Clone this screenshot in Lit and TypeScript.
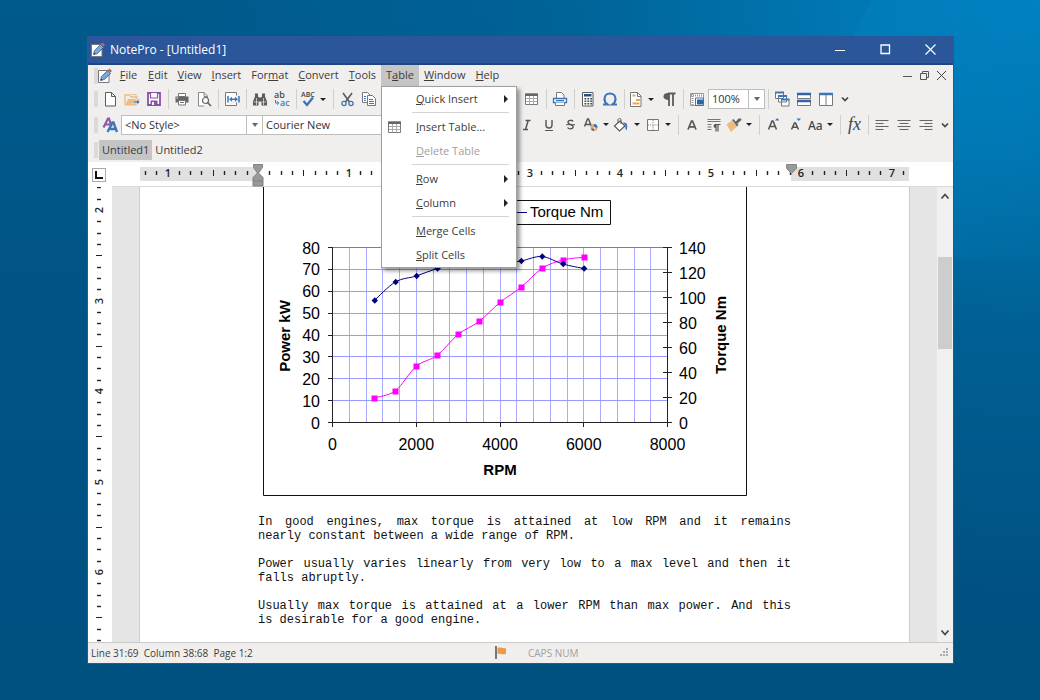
import { LitElement, html, svg, css, nothing } from "lit";
import { customElement, property, state } from "lit/decorators.js";

const G = "#5b5b5b";
const B = "#3a76b8";

/* Toolbar glyphs, each drawn on an 18 x 18 grid. */
const icons: Record<string, unknown> = {
  app: svg`<path d="M2.500 3.500h10.500v12H2.500z" fill="#fff" stroke="#777"/><path d="M4.500 13.500l1-4 6-6 3 3-6 6z" fill="#7aa7d8" stroke="#3a628f" stroke-width=".8"/><path d="M12 3l1.500-1.500 2.500 2.500-1.500 1.500z" fill="#c8606a"/><path d="M4.500 13.500l.6-2 1.400 1.400z" fill="#333"/>`,
  blank: svg`<path d="M4.500 2.500h6l4 4v9.500h-10zM10.500 2.500v4h4" fill="#fff" stroke="${G}"/>`,
  open: svg`<path d="M2 15V5h4.500l1.500 2h6v2" fill="none" stroke="#eebc7c" stroke-width="1.400"/><path d="M2 15.500l3-6.500h12l-3 6.500z" fill="#eebc7c"/><path d="M9 14c1-3 3-3.500 5-3v-2l3 3-3 3v-2c-2-.5-3.500-.2-5 1z" fill="${B}" stroke="#fff" stroke-width=".6"/><path d="M8 4.500h5V7" fill="none" stroke="#eebc7c"/>`,
  save: svg`<path d="M3 3h12v12H3z" fill="#fff" stroke="#8a4fa8" stroke-width="1.800"/><path d="M5.500 3v5h7V3" fill="#fff" stroke="#8a4fa8" stroke-width="1.200"/><path d="M5.500 10.500h7v5h-7z" fill="#8a4fa8"/><path d="M7 12h2v3H7z" fill="#fff"/>`,
  print: svg`<path d="M5.500 3.500h7v3h-7z" fill="#fff" stroke="#777"/><path d="M2.500 6.500h13v6h-13z" fill="#666"/><path d="M3.500 8h1.500" stroke="#fff"/><path d="M5.500 10.500h7v4.500h-7z" fill="#fff" stroke="#777"/><path d="M7 12.500h4" stroke="#777"/>`,
  preview: svg`<path d="M9 16H3.500V2.500h5.500l3.500 3.500v2M9 2.500v4h3.500" fill="#fff" stroke="#888"/><circle cx="10.500" cy="10.500" r="3" fill="#fff" stroke="#666" stroke-width="1.200"/><path d="M12.500 12.500l3.500 3.500" stroke="#666" stroke-width="1.700"/>`,
  fit: svg`<path d="M5 15.500H2.500v-13h11v3M13.500 12.500v3H5" fill="#fff" stroke="#777"/><path d="M5 6v6.500M16 6v6.500M7 9.300h7" stroke="${B}" stroke-width="1.500" fill="none"/><path d="M9 6.800L6 9.300l3 2.500zM12 6.800l3 2.500-3 2.500z" fill="${B}"/>`,
  find: svg`<path d="M4 3.500h3v3l1 1h2l1-1v-3h3v3l2 5v4h-5.500v-4h-3v4H2v-4l2-5z" fill="${G}"/><path d="M5.500 8v7M12.500 8v7M3 12h4M11 12h4" stroke="#f0efee" stroke-width=".7"/>`,
  replace: svg`<text x="1" y="8" font-family="Noto Sans" font-size="9" font-weight="500" fill="#444">ab</text><text x="7" y="16" font-family="Noto Sans" font-size="9" font-weight="500" fill="${B}">ac</text><path d="M2.500 10v3h3M4 11.300l1.800 1.700L4 14.700" fill="none" stroke="${B}"/>`,
  spell: svg`<text x="2" y="7" font-family="Open Sans" font-size="7" font-weight="600" fill="#444">ABC</text><path d="M4.500 11l3.500 4 6-7.500" fill="none" stroke="${B}" stroke-width="2.400"/>`,
  cut: svg`<path d="M5 3l6.500 9M14 3l-6.500 9" stroke="${G}" stroke-width="1.600"/><circle cx="6" cy="13.500" r="2.100" fill="none" stroke="${B}" stroke-width="1.300"/><circle cx="13" cy="13.500" r="2.100" fill="none" stroke="${B}" stroke-width="1.300"/>`,
  copy: svg`<path d="M2.500 2.500h5l2.500 2.500v7.500H2.500z" fill="#fff" stroke="#777"/><path d="M7.500 5.500h5l3 3v7h-8z" fill="#fff" stroke="#777"/><path d="M9 9.500h4M9 11.500h5M9 13.500h5M4 6.500h2M4 8.500h2M4 10.500h2" stroke="${B}"/>`,
  table: svg`<path d="M2.500 4h12v10.500h-12z" fill="#fff" stroke="#777"/><path d="M2 3.500h13v2.500H2z" fill="#666"/><path d="M3 8.500h11.500M3 11.500h11.500M6.500 6v8.500M10.500 6v8.500" stroke="#aaa"/>`,
  printer: svg`<path d="M5.500 8V2.500h5l2.500 2.500v3" fill="#fff" stroke="#777"/><path d="M2.500 8.500h13v4h-13z" fill="#fff" stroke="${B}" stroke-width="1.300"/><path d="M5 10.500h8" stroke="${B}" stroke-width="1.200"/><path d="M4.500 12.500v3h9v-3" fill="#fff" stroke="#777"/>`,
  calc: svg`<path d="M3.500 2.500h10.500v13.500H3.500z" fill="#fff" stroke="${G}"/><path d="M5 4h7.500v2.500H5z" fill="#244f84"/><path d="M5.500 8.800h7.500M5.500 11.300h7.500M5.500 13.800h7.500" stroke="#444" stroke-width="1.400" stroke-dasharray="1.800 1.100"/>`,
  omega: svg`<path d="M2 14.500h4.500c-2-1.500-3-3-3-5.500 0-3.300 2.300-5.500 5.500-5.500s5.500 2.200 5.500 5.500c0 2.500-1 4-3 5.500H16" fill="none" stroke="${B}" stroke-width="2.200"/>`,
  page: svg`<path d="M3.500 2.500h7l3.500 3.500v10.500H3.500z" fill="#fff" stroke="#777"/><path d="M10.500 2.500v4H14" fill="none" stroke="#777"/><path d="M5.500 5.500h3M5.500 13.500h7M9 10h4" stroke="#eba850" stroke-width="2"/>`,
  pilcrow: svg`<path d="M9 16V3.500M13 16V3.500M15.500 3.500H8" stroke="${G}" stroke-width="1.800" fill="none"/><path d="M9 3C5 2.600 3.500 4.500 3.500 6.500S5.500 10 9 10z" fill="${G}"/>`,
  layout: svg`<path d="M2.500 3.500h13v12h-13z" fill="#fff" stroke="#999"/><path d="M3 5.500h12M4.500 4v11" stroke="#999" stroke-width="2" stroke-dasharray="1 1"/><path d="M7.500 8h8v7.500h-8z" stroke="${B}" fill="#fff"/><path d="M9 9.500h6v5H9z" fill="#2f65a5"/>`,
  cascade: svg`<path d="M2.500 2.500h8v6h-8zM5.500 6h8v6h-8zM8.500 9.500H16v6.500H8.500z" fill="#fff" stroke="#777"/><path d="M2 2.500h9M5 6h9M8 9.500h8.500" stroke="${B}" stroke-width="2"/>`,
  tileh: svg`<path d="M2.500 3.500h13v5h-13zM2.500 10.500h13v5h-13z" fill="#fff" stroke="#777"/><path d="M2 4h14M2 11h14" stroke="#2f65a5" stroke-width="2.500"/>`,
  tilev: svg`<path d="M2.500 3.500h13v12h-13zM9 4v11" fill="#fff" stroke="#777"/><path d="M2 4h14" stroke="${B}" stroke-width="2.500"/>`,
  style: svg`<path d="M2.500 11.500L7 2.500h1l2.500 8M4.500 8.500h4.500" fill="none" stroke="#8c5aa8" stroke-width="2.200"/><path d="M6.500 16L11.500 6.500h1L16 16M8.500 13h6" fill="none" stroke="${B}" stroke-width="2.300"/>`,
  bold: svg`<text x="5" y="14" font-family="Noto Sans" font-weight="700" font-size="12" fill="#444">B</text>`,
  italic: svg`<path d="M7.500 4.500h5M5 13.500h5M10.200 4.500L7.500 13.500" fill="none" stroke="#555" stroke-width="1.500"/>`,
  under: svg`<path d="M6 4v5c0 4 6 4 6 0V4" fill="none" stroke="#555" stroke-width="1.400"/><path d="M5 14.500h8" stroke="#555"/>`,
  strike: svg`<path d="M11 5.500C10.500 3.800 6 3.800 6 6.300c0 1.700 1.800 2 2.700 2.300 1.500.4 2.600 1 2.400 2.500-.3 2.300-4.500 2.200-5.500.4" fill="none" stroke="#555" stroke-width="1.400"/><path d="M4 8.700h9" stroke="#555"/>`,
  color: svg`<path d="M2.500 10.500L5.500 3h1l3 7.500M3.500 8.500h5" fill="none" stroke="#555" stroke-width="1.400"/><circle cx="12" cy="11.500" r="3.500" fill="#eba560"/><path d="M12 8a3.500 3.500 0 0 1 3.500 3.500l-3.500.5zM9 13a3.500 3.500 0 0 0 3 2v-3z" fill="${B}"/><circle cx="12.500" cy="12" r="1.100" fill="#f0efee"/>`,
  bucket: svg`<path d="M1.500 10L7 5l5 5-5.500 5z" fill="#fff" stroke="${G}" stroke-width="1.200"/><path d="M5 7V4c0-2 3-2 3 0v4" fill="none" stroke="${G}"/><path d="M10 6.500c4.500-.5 5 3 3.500 8-1.500-1-1.200-3.500-1-5z" fill="${B}"/>`,
  borders: svg`<path d="M3.500 3.500h11v11h-11z" fill="#fff" stroke="#777"/><path d="M9 4v10M4 9h10" stroke="#777" stroke-dasharray="1 1.200"/>`,
  letter: svg`<path d="M5 13.500L8.500 5h1L13 13.500M6.500 10.800h5" fill="none" stroke="#555" stroke-width="1.700"/>`,
  para: svg`<path d="M2.500 3.500h13M2.500 5.500h13M2.500 8.500h4M2.500 11h4M2.500 13.500h4" stroke="#777"/><path d="M11 15.500V9M13 15.500V9M15.500 8.500H9.500" stroke="#555" stroke-width="1.200"/><path d="M11 8.300C8 8 7.500 12 11 12z" fill="#555"/>`,
  brush: svg`<path d="M1.500 8.500l5-4 5.500 6-6 5.500z" fill="#eebc7c"/><path d="M7 4l1.500-1 5 6L12 10.500z" fill="#666"/><path d="M10 6.500l3.500-4 2.500 0 .5 1.500-4.500 4z" fill="#666"/>`,
  grow: svg`<path d="M4.500 13.500L8 5h1l3.500 8.500M6 10.500h5" fill="none" stroke="#555" stroke-width="1.600"/><path d="M11 4.500l2.200-2.500 2.200 2.500z" fill="${B}"/>`,
  shrink: svg`<path d="M5.500 13.500L8.500 7h1l3 6.500M7 11.300h4" fill="none" stroke="#555" stroke-width="1.600"/><path d="M10.500 2.500h4.500L12.700 5z" fill="${B}"/>`,
  casing: svg`<text x="2" y="14" font-family="Noto Sans" font-size="12" font-weight="500" fill="#444">Aa</text>`,
  fx: svg`<text x="3" y="14" font-family="Liberation Serif" font-style="italic" font-size="18" fill="#444">fx</text>`,
  left: svg`<path d="M2.500 4.500h13M2.500 7.500h8M2.500 10.500h13M2.500 13.500h8" stroke="#666"/>`,
  center: svg`<path d="M2.500 4.500h13M4.500 7.500h9M2.500 10.500h13M4.500 13.500h9" stroke="#666"/>`,
  right: svg`<path d="M2.500 4.500h13M7.500 7.500h8M2.500 10.500h13M7.500 13.500h8" stroke="#666"/>`,
  more: svg`<path d="M6 7.500l3 3 3-3" fill="none" stroke="#444" stroke-width="1.700"/>`,
};

const icon = (name: string) =>
  html`<svg width="18" height="18" viewBox="0 0 18 18" aria-hidden="true">${icons[name]}</svg>`;

/* Text with its keyboard accelerator marked by an ampersand. */
const accel = (label: string) => {
  const i = label.indexOf("&");
  return i < 0 ? label : html`${label.slice(0, i)}<u>${label[i + 1]}</u>${label.slice(i + 2)}`;
};

const FILE_TOOLS = ["blank", "open", "save", "|", "print", "preview", "|", "fit", "|", "find", "replace", "|", "spell+", "|", "cut", "copy"];
const INSERT_TOOLS = ["table", "|", "printer", "|", "calc", "omega", "|", "page+", "pilcrow", "|", "layout"];
const WINDOW_TOOLS = ["|", "cascade", "tileh", "tilev"];
const TEXT_TOOLS = ["bold", "italic", "under", "strike", "color+", "bucket+", "borders+", "|", "letter", "para", "brush+", "|", "grow", "shrink", "casing+", "|", "fx", "|", "left", "center", "right"];

const tools = (list: string[]) =>
  list.map((t) => {
    if (t === "|") return html`<span class="sep"></span>`;
    const drop = t.endsWith("+");
    const name = drop ? t.slice(0, -1) : t;
    return html`<button class="tool ${drop ? "drop" : ""}" aria-label=${name}>
      ${icon(name)}${drop ? html`<i class="caret"></i>` : nothing}
    </button>`;
  });

const INCH = 90.5;

@customElement("engine-chart")
class EngineChart extends LitElement {
  static styles = css`
    :host { display: block; }
    svg { display: block; max-width: 100%; font-family: "Liberation Sans", Arial, sans-serif; }
    .num { font-size: 16px; }
    .name { font-size: 15px; font-weight: 700; }
    .key { font-size: 15px; }
    .grid { stroke: #9999ff; }
    .grid.up { stroke: #aaaaff; }
  `;

  power = [[1000, 11.3], [1500, 14.5], [2000, 25.7], [2500, 30.7], [3000, 40.3], [3500, 46.2], [4000, 54.9], [4500, 61.8], [5000, 70.4], [5500, 74.3], [6000, 75.5]];
  torque = [[1000, 97.6], [1500, 112.4], [2000, 117.2], [2500, 123.2], [3000, 127], [3500, 128], [4000, 127], [4500, 129.2], [5000, 132.8], [5500, 126.8], [6000, 123.2]];

  render() {
    const x = (v: number) => 69.5 + (v * 335) / 8000;
    const y = (v: number, max: number) => 235.5 - (v * 175) / max;
    const steps = (n: number) => Array.from({ length: n + 1 }, (_, i) => i);
    const curve = (pts: number[][], max: number) => {
      const p = pts.map(([a, b]) => [x(a), y(b, max)]);
      let d = `M${p[0]}`;
      for (let i = 0; i < p.length - 1; i++) {
        const a = p[Math.max(i - 1, 0)], b = p[i], c = p[i + 1], e = p[Math.min(i + 2, p.length - 1)];
        d += `C${b[0] + (c[0] - a[0]) / 6},${b[1] + (c[1] - a[1]) / 6} ${c[0] - (e[0] - b[0]) / 6},${c[1] - (e[1] - b[1]) / 6} ${c}`;
      }
      return d;
    };
    return html`<svg width="484" height="309" viewBox="0 0 484 309" role="img" aria-label="Power and torque against RPM">
      <path d="M.5 0v308.500h483V0" fill="#fff" stroke="#111" />
      <path d="M130.500 13.500h217v24h-217z" fill="#fff" stroke="#111" />
      <path d="M230 25.500h34" stroke="#000080" />
      <text class="key" x="267" y="30">Torque Nm</text>
      ${steps(19).slice(1).map((i) => svg`<path class="grid up" d="M${Math.floor(x(i * 400)) + 0.5} 61v174"/>`)}
      ${steps(7).slice(1).map((i) => svg`<path class="grid" d="M70 ${Math.floor(y(i * 10, 80)) + 0.5}h334"/>`)}
      <path d="M70 60.500h334" stroke="#808080" />
      <path d="M69.500 60v176M404.500 60v176M65 235.500h344" fill="none" stroke="#222" />
      ${steps(8).map((i) => svg`<path d="M65 ${Math.floor(y(i * 10, 80)) + 0.5}h5" stroke="#222"/>
        <text class="num" x="57" y=${y(i * 10, 80) + 6} text-anchor="end">${i * 10}</text>`)}
      ${steps(7).map((i) => svg`<path d="M400 ${Math.floor(y(i * 20, 140)) + 0.5}h9" stroke="#222"/>
        <text class="num" x="416" y=${y(i * 20, 140) + 6}>${i * 20}</text>`)}
      ${steps(4).map((i) => svg`<path d="M${Math.floor(x(i * 2000)) + 0.5} 235v5" stroke="#222"/>
        <text class="num" x=${x(i * 2000)} y="263" text-anchor="middle">${i * 2000}</text>`)}
      <text class="name" x="237" y="288" text-anchor="middle">RPM</text>
      <text class="name" transform="translate(27 149) rotate(-90)" text-anchor="middle">Power kW</text>
      <text class="name" transform="translate(463 148) rotate(-90)" text-anchor="middle">Torque Nm</text>
      <path d=${curve(this.power, 80)} fill="none" stroke="#f0f" />
      ${this.power.map(([a, b]) => svg`<rect x=${Math.round(x(a)) - 2.5} y=${Math.round(y(b, 80)) - 2.5} width="6" height="6" fill="#f0f"/>`)}
      <path d=${curve(this.torque, 140)} fill="none" stroke="#000080" />
      ${this.torque.map(([a, b]) => svg`<path d="M${x(a) - 2.8} ${y(b, 140)}l3.200-3.200 3.200 3.200-3.200 3.200z" fill="#000080"/>`)}
    </svg>`;
  }
}

@customElement("app-root")
class AppRoot extends LitElement {
  @state() openMenu = "T&able";
  @property({ type: String }) fileName = "Untitled1";

  static styles = css`
    * { box-sizing: border-box; }
    :host {
      box-sizing: border-box;
      display: flex;
      height: 100vh;
      min-height: 400px;
      padding: 36px 86px 36px 87px;
      font: 11px/16px "Open Sans", "Noto Sans", sans-serif;
      color: #3c3c3c;
      background:
        linear-gradient(118deg, transparent 0 74%, rgba(0, 140, 205, 0.22) 74% 80%, rgba(0, 140, 205, 0.05) 100%) top / 100% 37% no-repeat,
        radial-gradient(ellipse 85% 85% at 100% 0, #007fbf 0, #0077b3 22%, rgba(0, 104, 158, 0.6) 55%, transparent 100%),
        linear-gradient(to bottom, #005a8c, #005485 45%, #005080 100%);
    }
    u { text-underline-offset: 1px; }
    button { font: inherit; color: inherit; border: 0; padding: 0; margin: 0; background: none; }
    svg { display: block; flex: none; overflow: visible; }
    .window { flex: 1; min-width: 0; display: flex; flex-direction: column; background: #f0efee; border: 1px solid #1f5aa3; border-top: 0; }
    .title { flex: none; height: 29px; display: flex; align-items: center; padding-left: 1px; background: #2b579a; border-bottom: 2px solid #1f4484; color: #fff; font-size: 12px; }
    .title .name { flex: 1; font: inherit; margin: 0; padding-left: 3px; }
    .title button { width: 45px; height: 27px; display: grid; place-items: center; }
    .bar { flex: none; display: flex; align-items: center; padding-left: 6px; }
    .grip { flex: none; width: 4px; height: 16px; margin-right: 1px; background: #dadada; }
    .menubar { height: 21px; align-items: stretch; }
    .menubar .grip, .menubar .doc { align-self: center; }
    .doc { width: 15px; display: flex; justify-content: flex-end; }
    .menus { flex: 1; display: flex; }
    .menu { position: relative; display: flex; }
    .menu > button { padding: 0 5px 2px; min-width: 29px; }
    .menu.open > button { background: #c5c5c5; }
    .mdi { display: flex; padding-right: 3px; }
    .mdi button { width: 17px; display: grid; place-items: center; }
    .popup { position: absolute; z-index: 2; left: 0; top: 100%; width: 136px; background: #fff; border: 1px solid #a0a0a0; box-shadow: 3px 3px 4px rgba(0, 0, 0, 0.4); }
    .item { width: 100%; height: 24px; display: grid; grid-template-columns: 24px 1fr 8px; column-gap: 9px; align-items: center; padding: 0 4px 0 1px; text-align: left; }
    .item svg { margin-left: 3px; }
    .item:disabled { color: #a0a0a0; }
    .line { height: 1px; margin: 1px 7px 2px 30px; background: #d4d4d4; }
    .arrow { border: 4px solid transparent; border-left-color: #222; border-right-width: 0; width: 4px; }
    .tools { height: 26px; }
    .tools.text { height: 25px; }
    .tool { flex: none; width: 22px; height: 22px; display: flex; align-items: center; justify-content: center; }
    .tool.drop { width: 31px; }
    .tool.more { width: 16px; }
    .caret { border: 3px solid transparent; border-top-color: #222; border-bottom-width: 0; margin: 0 4px 0 3px; }
    .sep { flex: none; width: 6px; height: 20px; background: linear-gradient(#cfcfcf, #cfcfcf) center / 1px 100% no-repeat; }
    .covered { flex: 0 0 141px; }
    .combo { flex: none; display: grid; height: 20px; }
    .combo.zoom { width: 57px; }
    .combo.style { width: 142px; }
    .combo.font { width: 171px; margin-left: -1px; }
    .combo.size { width: 61px; }
    .combo > * { grid-area: 1 / 1; }
    .combo select { appearance: none; width: 100%; font: inherit; color: #333; background: #fff; border: 1px solid #bdbdbd; border-radius: 0; padding: 0 18px 0 3px; margin: 0; }
    .combo span { justify-self: end; width: 17px; border: 1px solid #bdbdbd; display: grid; place-items: center; pointer-events: none; }
    .combo i { border: 3px solid transparent; border-top: 4px solid #666; border-bottom: 0; }
    .tabs { height: 25px; }
    .tab { height: 20px; padding: 0 3px; }
    .tab.on { background: #c5c5c5; }
    .rule { flex: none; height: 25px; display: flex; background: #fff; }
    .corner { flex: none; width: 24px; display: grid; place-items: center; padding-right: 2px; }
    .corner button { width: 14px; height: 14px; border: 1px solid #aaa; display: grid; place-items: center; }
    .across { flex: 1; min-width: 0; display: flex; justify-content: center; border-bottom: 1px solid #d9d9d9; }
    .rule .end { flex: none; width: 16px; border-bottom: 1px solid #d9d9d9; }
    .ruler { font: 600 11px "Open Sans", "Noto Sans", sans-serif; fill: #222; }
    .work { flex: 1; min-height: 0; display: flex; background: #fff; }
    .down { flex: none; width: 24px; overflow: hidden; }
    .desk { flex: 1; min-width: 0; display: flex; justify-content: center; overflow: hidden; background: #e5e5e5; }
    .page { flex: 0 1 771px; padding: 0 118px; background: #fff; border: solid #cccccc; border-width: 0 1px; }
    .page engine-chart { margin: 0 0 19px 5px; }
    .page p { margin: 0 0 14px; font: 12px/14px "Liberation Mono", "Courier New", monospace; color: #111; }
    .lead { text-align-last: justify; display: block; }
    .tail { display: block; }
    .scroll { flex: none; width: 16px; display: flex; flex-direction: column; background: #f0f0f0; }
    .scroll button { height: 18px; display: grid; place-items: center; }
    .track { flex: 1; padding: 52px 1px 0; }
    .thumb { height: 25%; background: #cdcdcd; }
    .status { flex: none; height: 21px; display: flex; align-items: center; padding: 0 4px 0 3px; background: #f0efee; border-top: 1px solid #c9c9c9; font-size: 10px; }
    .where { flex: 0 0 403px; }
    .keys { flex: 1; padding-left: 20px; color: #a0a0a0; }
  `;

  menuItems = [
    { label: "&Quick Insert", sub: true }, null,
    { label: "&Insert Table...", icon: "table" }, { label: "&Delete Table", off: true }, null,
    { label: "&Row", sub: true }, { label: "&Column", sub: true }, null,
    { label: "&Merge Cells" }, { label: "&Split Cells" },
  ] as ({ label: string; sub?: boolean; icon?: string; off?: boolean } | null)[];

  text = [
    ["In good engines, max torque is attained at low RPM and it remains", "nearly constant between a wide range of RPM."],
    ["Power usually varies linearly from very low to a max level and then it", "falls abruptly."],
    ["Usually max torque is attained at a lower RPM than max power. And this", "is desirable for a good engine."],
  ];

  menu(label: string) {
    const open = this.openMenu === label;
    return html`<div class="menu ${open ? "open" : ""}">
      <button @click=${() => (this.openMenu = label)}>${accel(label)}</button>
      ${open && label === "T&able" ? html`<div class="popup" role="menu">
        ${this.menuItems.map((m) => m
          ? html`<button class="item" role="menuitem" ?disabled=${m.off}>
              <span>${m.icon ? icon(m.icon) : nothing}</span><span>${accel(m.label)}</span>${m.sub ? html`<i class="arrow"></i>` : nothing}
            </button>`
          : html`<div class="line"></div>`)}
      </div>` : nothing}
    </div>`;
  }

  combo(kind: string, name: string, value: string) {
    return html`<label class="combo ${kind}"><select aria-label=${name}><option>${value}</option></select><span><i></i></span></label>`;
  }

  ruler(from: number, to: number, zero: number, vertical: boolean) {
    const marks = [];
    for (let n = Math.ceil(((from - zero) / INCH) * 8); n <= ((to - zero) / INCH) * 8; n++) {
      const p = Math.round(zero + (n * INCH) / 8);
      if (n % 8 === 0) {
        if (n !== 0) {
          marks.push(vertical
            ? svg`<text transform="translate(15 ${p}) rotate(-90)" text-anchor="middle">${Math.abs(n / 8)}</text>`
            : svg`<text x=${p} y="15" text-anchor="middle">${Math.abs(n / 8)}</text>`);
        }
      } else {
        const half = n % 4 === 0;
        const s = half ? 3 : 2;
        const w = half ? 1 : 1.4;
        marks.push(vertical
          ? svg`<path d="M${11 - s} ${p + 0.5}h${2 * s}" stroke="#222" stroke-width=${w}/>`
          : svg`<path d="M${p + 0.5} ${11 - s}v${2 * s}" stroke="#222" stroke-width=${w}/>`);
      }
    }
    return marks;
  }

  render() {
    return html`<div class="window">
      <header class="title">
        ${icon("app")}<h1 class="name">NotePro - [${this.fileName}]</h1>
        <button aria-label="Minimize"><svg width="11" height="11"><path d="M0 6.500h10" stroke="#fff"/></svg></button>
        <button aria-label="Maximize"><svg width="11" height="11"><path d="M1 1h8.500v8.500H1z" fill="none" stroke="#fff" stroke-width="1.300"/></svg></button>
        <button aria-label="Close"><svg width="11" height="11"><path d="M.5 .5l10 10M10.500 .5l-10 10" stroke="#fff" stroke-width="1.200"/></svg></button>
      </header>
      <nav class="bar menubar">
        <span class="grip"></span><span class="doc">${icon("app")}</span>
        <div class="menus">
          ${["&File", "&Edit", "&View", "&Insert", "For&mat", "&Convert", "&Tools", "T&able", "&Window", "&Help"].map((l) => this.menu(l))}
        </div>
        <div class="mdi">
          <button aria-label="Minimize document"><svg width="11" height="11"><path d="M1 6.500h9" stroke="#555"/></svg></button>
          <button aria-label="Restore document"><svg width="11" height="11"><path d="M3.500 3.500v-2h6v6h-2M1.500 3.500h6v6h-6z" fill="none" stroke="#555"/></svg></button>
          <button aria-label="Close document"><svg width="11" height="11"><path d="M1 1l9 9M10 1l-9 9" stroke="#444"/></svg></button>
        </div>
      </nav>
      <div class="bar tools">
        <span class="grip"></span>${tools(FILE_TOOLS)}<span class="covered"></span>${tools(INSERT_TOOLS)}
        ${this.combo("zoom", "Zoom", "100%")}${tools(WINDOW_TOOLS)}
        <button class="tool more" aria-label="More">${icon("more")}</button>
      </div>
      <div class="bar tools text">
        <span class="grip"></span>${tools(["style"])}
        ${this.combo("style", "Style", "<No Style>")}${this.combo("font", "Font", "Courier New")}${this.combo("size", "Size", "10")}
        ${tools(TEXT_TOOLS)}
        <button class="tool more" aria-label="More">${icon("more")}</button>
      </div>
      <div class="bar tabs">
        <span class="grip"></span>
        <button class="tab on">Untitled1</button><button class="tab">Untitled2</button>
      </div>
      <div class="rule">
        <div class="corner"><button aria-label="Tab stop"><svg width="8" height="8"><path d="M1 0v7h7" fill="none" stroke="#111" stroke-width="2"/></svg></button></div>
        <div class="across">
          <svg class="ruler" width="769" height="24" viewBox="0 0 769 24">
            <path d="M0 5h118v14H0zM651 5h118v14H651z" fill="#e0e0e0"/>
            ${this.ruler(3, 768, 118, false)}
            <path d="M113.500 2.500h9v3l-4 5.500 4.500 4.500v8.500h-10v-8.500l4.500-4.500-4-5.500zM113.500 19h9" fill="#999" stroke="#808080"/>
            <path d="M646.500 2.500h10v4l-5 5-5-5z" fill="#999" stroke="#888"/>
          </svg>
        </div>
        <div class="end"></div>
      </div>
      <main class="work">
        <div class="down"><svg class="ruler" width="24" height="456">${this.ruler(0, 456, -158, true)}</svg></div>
        <div class="desk">
          <article class="page">
            <engine-chart></engine-chart>
            ${this.text.map(([lead, tail]) => html`<p><span class="lead">${lead}</span> <span class="tail">${tail}</span></p>`)}
          </article>
        </div>
        <div class="scroll">
          <button aria-label="Scroll up"><svg width="10" height="8"><path d="M1.500 6.500l3.500-4 3.500 4" fill="none" stroke="#444" stroke-width="1.700"/></svg></button>
          <div class="track"><div class="thumb"></div></div>
          <button aria-label="Scroll down"><svg width="10" height="8"><path d="M1.500 1.500l3.500 4 3.500-4" fill="none" stroke="#444" stroke-width="1.700"/></svg></button>
        </div>
      </main>
      <footer class="status">
        <span class="where">Line 31:69&nbsp; Column 38:68&nbsp; Page 1:2</span>
        <svg width="14" height="14"><path d="M2 0v13" stroke="#777" stroke-width="2"/><path d="M3.500 2c3-1.500 5 1 8.500 0v6c-3.500 1-5.500-1-8.500 0z" fill="#ee9a48"/></svg>
        <span class="keys">CAPS NUM</span>
        <svg width="10" height="10"><path d="M7 1h2M4 4h2M7 4h2M1 7h2M4 7h2M7 7h2" stroke="#aaa" stroke-width="2"/></svg>
      </footer>
    </div>`;
  }
}
